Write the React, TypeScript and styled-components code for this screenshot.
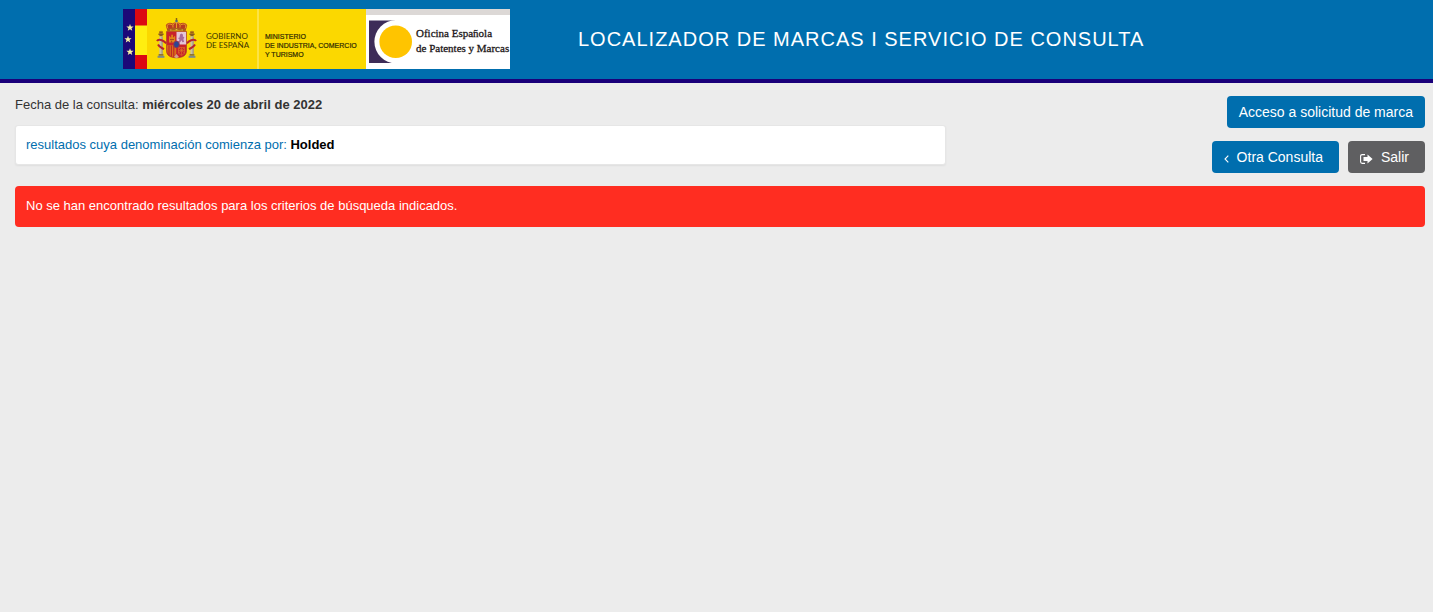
import React from "react";
import styled, { createGlobalStyle } from "styled-components";

const GlobalStyle = createGlobalStyle`
  *, *::before, *::after { box-sizing: border-box; }
  body {
    margin: 0;
    background: #ececec;
    color: #333;
    font-family: "Liberation Sans", Arial, Helvetica, sans-serif;
    font-size: 13px;
    line-height: 18px;
  }
`;

const Header = styled.header`
  display: flex;
  align-items: center;
  gap: 68px;
  padding: 9px 15px 10px 123px;
  background: #006eae;
  border-bottom: 4px solid #1a007a;
`;

const LogoImage = styled.svg`
  display: block;
  flex: none;
  width: 387px;
  height: 60px;
`;

const GovernmentLabel = styled.text`
  font-family: Lato, "Liberation Sans", sans-serif;
  font-size: 8px;
  fill: #3a3400;
`;

const MinistryLabel = styled.text`
  font-family: "Liberation Sans", Arial, sans-serif;
  font-size: 7px;
  fill: #2e2a00;
  stroke: #2e2a00;
  stroke-width: 0.2;
`;

const SerifLabel = styled.text`
  font-family: "Liberation Serif", "Times New Roman", serif;
  font-size: 11px;
  fill: #1d1718;
  stroke: #1d1718;
  stroke-width: 0.3;
`;

const Title = styled.h1`
  margin: 0;
  color: #fff;
  font-size: 20px;
  font-weight: 400;
  line-height: 28px;
  letter-spacing: 1px;
`;

const Main = styled.main`
  padding: 13px 8px 20px 15px;
`;

const TopRow = styled.div`
  display: flex;
  justify-content: space-between;
  align-items: flex-start;
`;

const Summary = styled.div`
  width: 66%;
`;

const QueryDate = styled.p`
  margin: 0 0 11px;
`;

const Criteria = styled.p`
  margin: 0;
  padding: 10px;
  background: #fff;
  border: 1px solid #e6e6e6;
  border-radius: 3px;
  box-shadow: 0 1px 2px rgba(0, 0, 0, 0.06);
  color: #006eae;

  strong { color: #000; }
`;

const Actions = styled.div`
  display: flex;
  flex-direction: column;
  align-items: flex-end;
  gap: 13px;
`;

const ActionRow = styled.div`
  display: flex;
  gap: 9px;
`;

const Button = styled.button<{ $tone?: "primary" | "neutral"; $withIcon?: boolean }>`
  display: inline-flex;
  align-items: center;
  height: 32px;
  padding: 0 ${({ $withIcon }) => ($withIcon ? 16 : 12)}px 0 12px;
  border: 0;
  border-radius: 4px;
  background: ${({ $tone }) => ($tone === "neutral" ? "#5f5f61" : "#006eae")};
  color: #fff;
  font: inherit;
  font-size: 14px;
  white-space: nowrap;
  cursor: pointer;
`;

const ButtonIcon = styled.svg<{ $wide?: boolean }>`
  width: ${({ $wide }) => ($wide ? 13 : 5)}px;
  height: 10px;
  margin: 4px 8px 0 0;
  fill: none;
  stroke: #fff;
`;

const Alert = styled.div`
  margin-top: 13px;
  padding: 11px 11px 12px;
  background: #ff2d21;
  border-radius: 4px;
  color: #fff;
`;

const star = (cx: number, cy: number, r: number) =>
  Array.from({ length: 10 }, (_, i) => {
    const radius = i % 2 ? r * 0.42 : r;
    const angle = (Math.PI / 5) * i - Math.PI / 2;
    return `${(cx + radius * Math.cos(angle)).toFixed(2)},${(cy + radius * Math.sin(angle)).toFixed(2)}`;
  }).join(" ");

const Pillar = () => (
  <g>
    <path d="M-2.6 -13.5h5.2v1.6h-1v1.2h-3.2v-1.2h-1z" fill="#8a5a20" />
    <path d="M-1.8 -16l1 .8.8-1.2.8 1.2 1-.8v2.5h-3.6z" fill="#9c5b1b" />
    <path d="M-1.6 -10.6h3.2V7h-3.2z" fill="#c9c0a6" />
    <path d="M.6 -10.6h1V7h-1z" fill="#968c78" />
    <path d="M-2.4 7h4.8v1.8h-4.8z" fill="#8f7531" />
    <path d="M-3.4 8.8h6.8v2h-6.8z" fill="#7c8a8c" />
  </g>
);

const CoatOfArms = () => (
  <g>
    <g transform="translate(38 38)"><Pillar /></g>
    <g transform="translate(69 38)"><Pillar /></g>
    <path d="M34 32c1-2 4-1.600 7 .4l2.200 1.800M35 35.500c1.500 3 3.500 3.200 6 4.600" fill="none" stroke="#b8242c" strokeWidth="2" />
    <path d="M73 32c-1-2-4-1.600-7 .4l-2.200 1.800M72 35.500c-1.500 3-3.500 3.200-6 4.600" fill="none" stroke="#b8242c" strokeWidth="2" />
    <path d="M43.500 22.500h20V42c0 4-3.500 6.800-10 6.800s-10-2.800-10-6.800z" fill="#c8222c" stroke="#a23a28" strokeWidth=".6" />
    <path d="M53.500 22.900h9.600v12.600h-9.600z" fill="#e5c6d8" />
    <path d="M57 25.500l1.500-1 1.600 1.200-.4 1.600 1.700 1.200-1 1.600.6 3-1.600.2-.8-2-1.800 2.400-1.400-.4 1.200-2.600-1.600-1.700 1.500-.5z" fill="#a7699c" />
    <path d="M46 33.500v-6.300h1.200v1h1v-2.400h1.800v2.400h1v-1h1.200v6.300z" fill="#df8618" />
    <path d="M47 30.500h4M48.600 33.500v-1.800" stroke="#91301f" strokeWidth=".7" />
    <path d="M44 36.200h9.200v11.900c-5-.3-8.900-1.700-8.900-6.100z" fill="#d96f18" />
    <path d="M46 36.500v9.500M48.400 36.500v11M50.800 36.500v11.500" stroke="#bb202a" strokeWidth="1" />
    <path d="M55.500 38.500h6v5.700l-3 2.400-3-2.400zM55.500 38.500l6 5.700M61.500 38.500l-6 5.700M58.500 38.500v7.500M55.500 41.400h6" fill="none" stroke="#df7a27" strokeWidth=".6" />
    <ellipse cx="53.500" cy="35.400" rx="2.900" ry="3.400" fill="#2d4791" stroke="#a43048" strokeWidth=".8" />
    <path d="M51 48l2.500-3 2.500 3-2.500 1.300z" fill="#d5a08d" />
    <path d="M44.400 21.800l-1.600-5.400c1.200-2.700 4.500-3.200 7-1.800 1-1.800 6.400-1.800 7.400 0 2.500-1.400 5.800-.9 7 1.800l-1.600 5.400c-5.700-1.500-12.500-1.500-18.200 0z" fill="#b83c20" />
    <path d="M45 19.500c-2.300-3.800.5-5.600 4.400-3.700M62 19.500c2.300-3.800-.5-5.600-4.400-3.700M50 18.500c-.7-3 1-5 3.500-5s4.200 2 3.500 5M53.500 13v6" fill="none" stroke="#edac27" strokeWidth=".9" />
    <path d="M44.400 20.200c5.800-1.600 12.400-1.600 18.200 0v2.200c-5.800-1.300-12.400-1.300-18.200 0z" fill="#a9601d" />
    <path d="M47 21h1.500M52.600 20.500h1.800M58.500 21h1.500" stroke="#e7c044" strokeWidth=".9" />
    <circle cx="53.500" cy="12" r="1.300" fill="#49668a" />
    <path d="M53.500 9v2.500M52.500 10h2" stroke="#77541b" strokeWidth=".8" />
  </g>
);

const Logo = () => (
  <LogoImage viewBox="0 0 387 60" role="img" aria-label="Gobierno de España, Oficina Española de Patentes y Marcas">
    <rect width="243" height="60" fill="#fbd800" />
    <rect width="12" height="60" fill="#1c0878" />
    <rect x="12" width="12" height="60" fill="#dc0812" />
    <rect x="12" y="16.500" width="12" height="29.500" fill="#ffee10" />
    <polygon points={star(7, 18.7, 3.8)} fill="#f8f2a4" />
    <polygon points={star(5, 30.500, 3.8)} fill="#f8f2a4" />
    <polygon points={star(7, 43, 3.8)} fill="#f8f2a4" />
    <CoatOfArms />
    <GovernmentLabel x="83" y="30">GOBIERNO</GovernmentLabel>
    <GovernmentLabel x="83" y="39">DE ESPAÑA</GovernmentLabel>
    <rect x="134.500" width="1" height="60" fill="#fdee8c" />
    <MinistryLabel x="142" y="30">MINISTERIO</MinistryLabel>
    <MinistryLabel x="142" y="39">DE INDUSTRIA, COMERCIO</MinistryLabel>
    <MinistryLabel x="142" y="48">Y TURISMO</MinistryLabel>
    <rect x="243" width="144" height="60" fill="#fff" />
    <rect x="243" width="144" height="6" fill="#dcd8d6" />
    <rect x="246" y="11.500" width="26" height="42.500" fill="#3d2c58" />
    <circle cx="273" cy="32.700" r="21.600" fill="#fff" />
    <circle cx="272.700" cy="32.700" r="16.300" fill="#ffc400" />
    <SerifLabel x="293" y="28">Oficina Española</SerifLabel>
    <SerifLabel x="293" y="43">de Patentes y Marcas</SerifLabel>
  </LogoImage>
);

export default function App() {
  return (
    <>
      <GlobalStyle />
      <Header>
        <Logo />
        <Title>LOCALIZADOR DE MARCAS I SERVICIO DE CONSULTA</Title>
      </Header>
      <Main>
        <TopRow>
          <Summary>
            <QueryDate>
              Fecha de la consulta: <strong>miércoles 20 de abril de 2022</strong>
            </QueryDate>
            <Criteria>
              resultados cuya denominación comienza por: <strong>Holded</strong>
            </Criteria>
          </Summary>
          <Actions>
            <Button type="button">Acceso a solicitud de marca</Button>
            <ActionRow>
              <Button type="button" $withIcon>
                <ButtonIcon viewBox="0 0 5 10" aria-hidden="true">
                  <path d="M4.300 1.600L1 5l3.300 3.400" strokeWidth="1.100" />
                </ButtonIcon>
                Otra Consulta
              </Button>
              <Button type="button" $tone="neutral" $withIcon>
                <ButtonIcon $wide viewBox="0 0 13 10" aria-hidden="true">
                  <path d="M5 .6H2.200Q.6.600.6 2.200v5.600q0 1.600 1.600 1.600H5" strokeWidth="1.100" />
                  <path d="M3.500 3h4V.4L12.600 5 7.500 9.600V7h-4z" fill="#fff" stroke="none" />
                </ButtonIcon>
                Salir
              </Button>
            </ActionRow>
          </Actions>
        </TopRow>
        <Alert role="alert">No se han encontrado resultados para los criterios de búsqueda indicados.</Alert>
      </Main>
    </>
  );
}
